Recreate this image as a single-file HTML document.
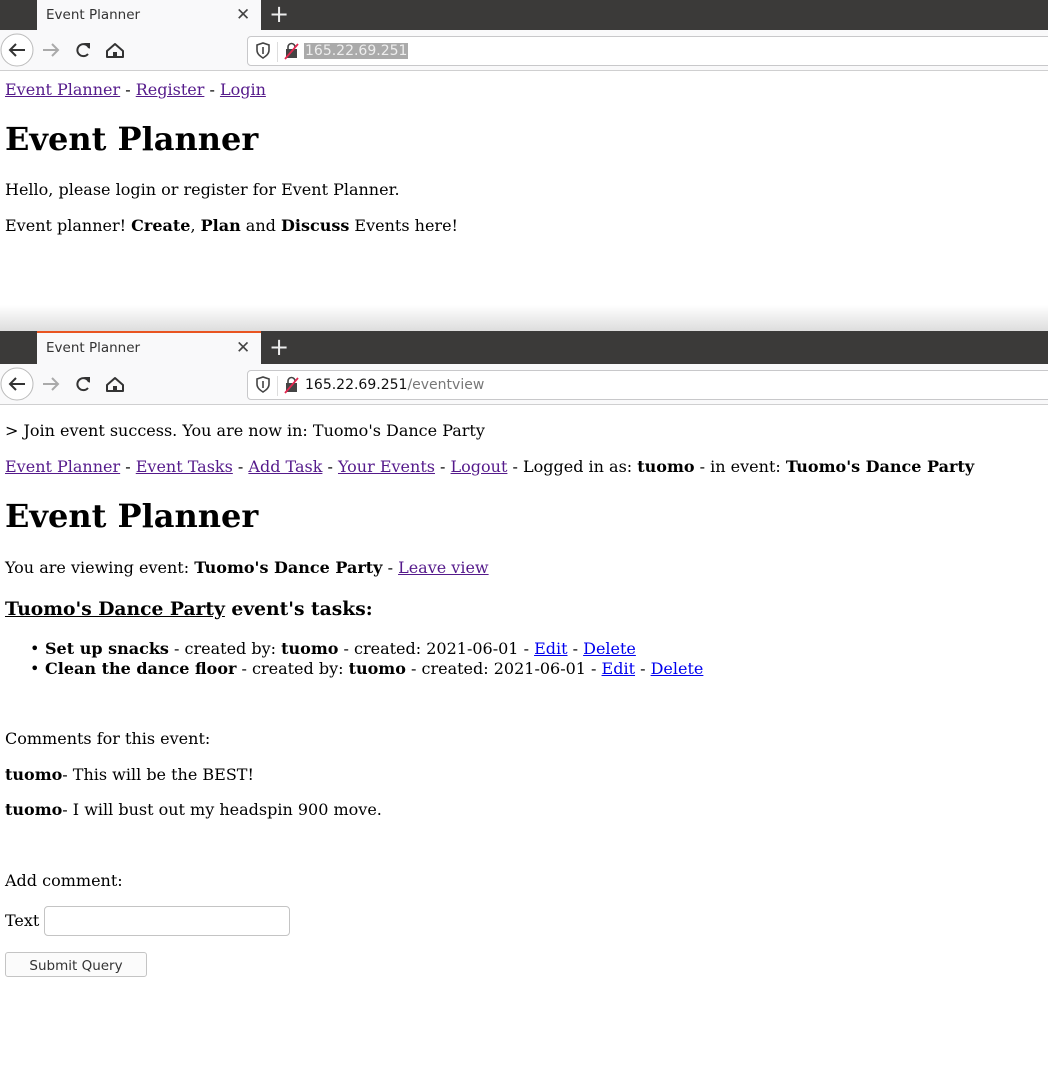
<!DOCTYPE html>
<html><head><meta charset="utf-8"><style>
*{margin:0;padding:0;box-sizing:border-box}
body{width:1048px;height:1073px;background:#fff;position:relative;overflow:hidden;font-family:"DejaVu Serif","Liberation Serif",serif;font-size:16px;color:#000}
.win{position:absolute;left:0;width:1048px}
.tabbar{position:absolute;left:0;top:0;width:1048px;height:30px;background:#3b3a39}
.tab{position:absolute;left:37px;top:0;width:224px;height:30px;background:#f9f9fa;font-family:"DejaVu Sans","Liberation Sans",sans-serif;font-size:13.5px;color:#333}
.tab span{position:absolute;left:9px;top:7px}
.tab .x{left:199px;top:5px;font-size:17px;color:#444}
.plus{position:absolute;left:269px;top:0;color:#eee;font-size:24px;font-family:"DejaVu Sans",sans-serif;line-height:28px}
.tool{position:absolute;left:0;top:30px;width:1048px;height:41px;background:#f9f9fa;border-bottom:1px solid #cfcfd0}
.url{position:absolute;left:247px;top:6px;width:810px;height:30px;background:#fff;border:1px solid #c8c8ca;border-radius:4px}
.urltext{position:absolute;left:57px;top:6px;font-family:"DejaVu Sans",sans-serif;font-size:14px;color:#111}
.sep{position:absolute;left:29px;top:5px;width:1px;height:20px;background:#ddd}
a{color:#551a8b;text-decoration:underline}
a.b{color:#0000ee}
.l{position:absolute;left:5px;white-space:nowrap;line-height:19px}
.bul{position:absolute;left:30px;line-height:19px}
h1{position:absolute;left:5px;font-size:32px;font-weight:bold;line-height:38px;white-space:nowrap}
</style></head><body>

<div class="win" style="top:0;height:72px">
 <div class="tabbar"></div>
 <div class="tab"><span>Event Planner</span><span class="x">✕</span></div>
 <div class="plus">+</div>
 <div class="tool">
  <svg width="240" height="40" style="position:absolute;left:0;top:0">
   <circle cx="17" cy="20" r="16" fill="#fff" stroke="#bbb"/>
   <path d="M25 20H10M16 14l-6 6 6 6" stroke="#333" stroke-width="2" fill="none"/>
   <path d="M58 20H43M52 14l6 6-6 6" stroke="#aaa" stroke-width="2" fill="none"/>
   <path d="M89 18a6 6 0 1 0-1 6" stroke="#333" stroke-width="2" fill="none"/><path d="M84 13h6v6z" fill="#333"/>
   <path d="M107 21l8-7 8 7v6h-16z" stroke="#333" stroke-width="2" fill="none" stroke-linejoin="round"/><rect x="113" y="22" width="4" height="5" fill="#333"/>
  </svg>
  <div class="url">
   <svg width="60" height="28" style="position:absolute;left:0;top:0">
    <path d="M9 8l6-2 6 2v5c0 4-3 6-6 8-3-2-6-4-6-8z" stroke="#444" stroke-width="1.6" fill="none"/><path d="M15 10v7" stroke="#444" stroke-width="1.6"/>
    <rect x="38" y="12" width="11" height="9" fill="#444"/><path d="M40 12v-2a3.5 3.5 0 0 1 7 0" stroke="#444" stroke-width="1.6" fill="none"/>
    <path d="M37 22l13-15" stroke="#e22850" stroke-width="1.8"/>
   </svg>
   <div class="sep"></div>
   <div class="urltext" style="background:#aaa;color:#eee;padding:0 1px;left:56px">165.22.69.251</div>
  </div>
 </div>
</div>

<div class="l" style="top:80px"><a href="#">Event Planner</a> - <a href="#">Register</a> - <a href="#">Login</a></div>
<h1 style="top:120px">Event Planner</h1>
<div class="l" style="top:180px">Hello, please login or register for Event Planner.</div>
<div class="l" style="top:216px">Event planner! <b>Create</b>, <b>Plan</b> and <b>Discuss</b> Events here!</div>

<div style="position:absolute;left:0;top:305px;width:1048px;height:26px;background:linear-gradient(#fff,#ddd)"></div>

<div class="win" style="top:331px;height:74px">
 <div class="tabbar" style="height:33px"></div>
 <div class="tab" style="height:33px;border-top:2px solid #e95420"><span>Event Planner</span><span class="x">✕</span></div>
 <div class="plus" style="top:2px">+</div>
 <div class="tool" style="top:33px">
  <svg width="240" height="40" style="position:absolute;left:0;top:0">
   <circle cx="17" cy="20" r="16" fill="#fff" stroke="#bbb"/>
   <path d="M25 20H10M16 14l-6 6 6 6" stroke="#333" stroke-width="2" fill="none"/>
   <path d="M58 20H43M52 14l6 6-6 6" stroke="#aaa" stroke-width="2" fill="none"/>
   <path d="M89 18a6 6 0 1 0-1 6" stroke="#333" stroke-width="2" fill="none"/><path d="M84 13h6v6z" fill="#333"/>
   <path d="M107 21l8-7 8 7v6h-16z" stroke="#333" stroke-width="2" fill="none" stroke-linejoin="round"/><rect x="113" y="22" width="4" height="5" fill="#333"/>
  </svg>
  <div class="url">
   <svg width="60" height="28" style="position:absolute;left:0;top:0">
    <path d="M9 8l6-2 6 2v5c0 4-3 6-6 8-3-2-6-4-6-8z" stroke="#444" stroke-width="1.6" fill="none"/><path d="M15 10v7" stroke="#444" stroke-width="1.6"/>
    <rect x="38" y="12" width="11" height="9" fill="#444"/><path d="M40 12v-2a3.5 3.5 0 0 1 7 0" stroke="#444" stroke-width="1.6" fill="none"/>
    <path d="M37 22l13-15" stroke="#e22850" stroke-width="1.8"/>
   </svg>
   <div class="sep"></div>
   <div class="urltext">165.22.69.251<span style="color:#777">/eventview</span></div>
  </div>
 </div>
</div>

<div class="l" style="top:421px">&gt; Join event success. You are now in: Tuomo's Dance Party</div>
<div class="l" style="top:457px"><a href="#">Event Planner</a> - <a href="#">Event Tasks</a> - <a href="#">Add Task</a> - <a href="#">Your Events</a> - <a href="#">Logout</a> - Logged in as: <b>tuomo</b> - in event: <b>Tuomo's Dance Party</b></div>
<h1 style="top:497px">Event Planner</h1>
<div class="l" style="top:558px">You are viewing event: <b>Tuomo's Dance Party</b> - <a href="#">Leave view</a></div>
<div class="l" style="top:598px;font-size:18.7px;font-weight:bold;line-height:22px"><u>Tuomo's Dance Party</u> event's tasks:</div>
<div class="bul" style="top:639px">•</div>
<div class="l" style="top:639px;left:45px"><b>Set up snacks</b> - created by: <b>tuomo</b> - created: 2021-06-01 - <a class="b" href="#">Edit</a> - <a class="b" href="#">Delete</a></div>
<div class="bul" style="top:659px">•</div>
<div class="l" style="top:659px;left:45px"><b>Clean the dance floor</b> - created by: <b>tuomo</b> - created: 2021-06-01 - <a class="b" href="#">Edit</a> - <a class="b" href="#">Delete</a></div>
<div class="l" style="top:729px">Comments for this event:</div>
<div class="l" style="top:765px"><b>tuomo</b>- This will be the BEST!</div>
<div class="l" style="top:800px"><b>tuomo</b>- I will bust out my headspin 900 move.</div>
<div class="l" style="top:871px">Add comment:</div>
<div class="l" style="top:911px">Text</div>
<div style="position:absolute;left:44px;top:906px;width:246px;height:30px;border:1px solid #c4c4c4;border-radius:4px;background:#fff"></div>
<div style="position:absolute;left:5px;top:952px;width:142px;height:25px;border:1px solid #c4c4c4;border-radius:3px;background:#fbfbfb;font-family:'DejaVu Sans',sans-serif;font-size:13.5px;color:#333;text-align:center;line-height:26px">Submit Query</div>
</body></html>
